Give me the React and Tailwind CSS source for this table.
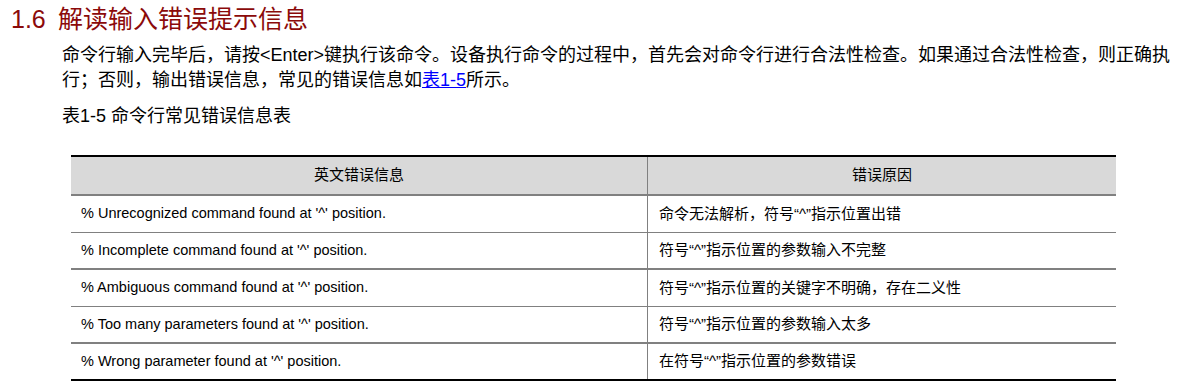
import React from 'react';

const rows = [
  { en: "% Unrecognized command found at '^' position.", zh: '命令无法解析，符号“^”指示位置出错', line: 'border-b border-[#808080]' },
  { en: "% Incomplete command found at '^' position.", zh: '符号“^”指示位置的参数输入不完整', line: 'border-b-2 border-[#808080]' },
  { en: "% Ambiguous command found at '^' position.", zh: '符号“^”指示位置的关键字不明确，存在二义性', line: 'border-b border-[#808080]' },
  { en: "% Too many parameters found at '^' position.", zh: '符号“^”指示位置的参数输入太多', line: 'border-b-2 border-[#808080]' },
  { en: "% Wrong parameter found at '^' position.", zh: '在符号“^”指示位置的参数错误', line: 'border-b-2 border-black' },
];

const App = () => {
  return (
    <div className="w-[1177px] h-[392px] bg-white text-black overflow-hidden font-['Liberation_Sans','Noto_Sans_CJK_SC',sans-serif]">
      {/* 标题 */}
      <h2 className="pt-[4px] pl-[11px] text-[25px] leading-[30px] text-[#8b0a0a] flex">
        <span className="w-[47px]">1.6</span>
        <span>解读输入错误提示信息</span>
      </h2>

      <div className="ml-[62px] mt-[9px] text-[18px] leading-[25px] w-[1110px]">
        <p>
          命令行输入完毕后，请按&lt;Enter&gt;键执行该命令。设备执行命令的过程中，首先会对命令行进行合法性检查。如果通过合法性检查，则正确执行；否则，输出错误信息，常见的错误信息如<a href="#" className="text-[#0000ff] underline">表1-5</a>所示。
        </p>
        <p className="mt-[11px]">表1-5 命令行常见错误信息表</p>
      </div>

      {/* 表格 */}
      <div className="ml-[71px] mt-[26px] w-[1045px] border-t-2 border-black">
        <div className="flex h-[39px] bg-[#d9d9d9] border-b-2 border-[#808080] text-[15px]">
          <div className="w-[577px] flex items-center justify-center border-r border-[#808080]">英文错误信息</div>
          <div className="flex-1 flex items-center justify-center">错误原因</div>
        </div>
        {rows.map((row) => (
          <div key={row.en} className={`flex h-[37px] ${row.line}`}>
            <div className="w-[577px] flex items-center pl-[10px] border-r border-[#808080] text-[14.5px]">{row.en}</div>
            <div className="flex-1 flex items-center pl-[11px] text-[15px]">{row.zh}</div>
          </div>
        ))}
      </div>
    </div>
  );
};

export default App;
